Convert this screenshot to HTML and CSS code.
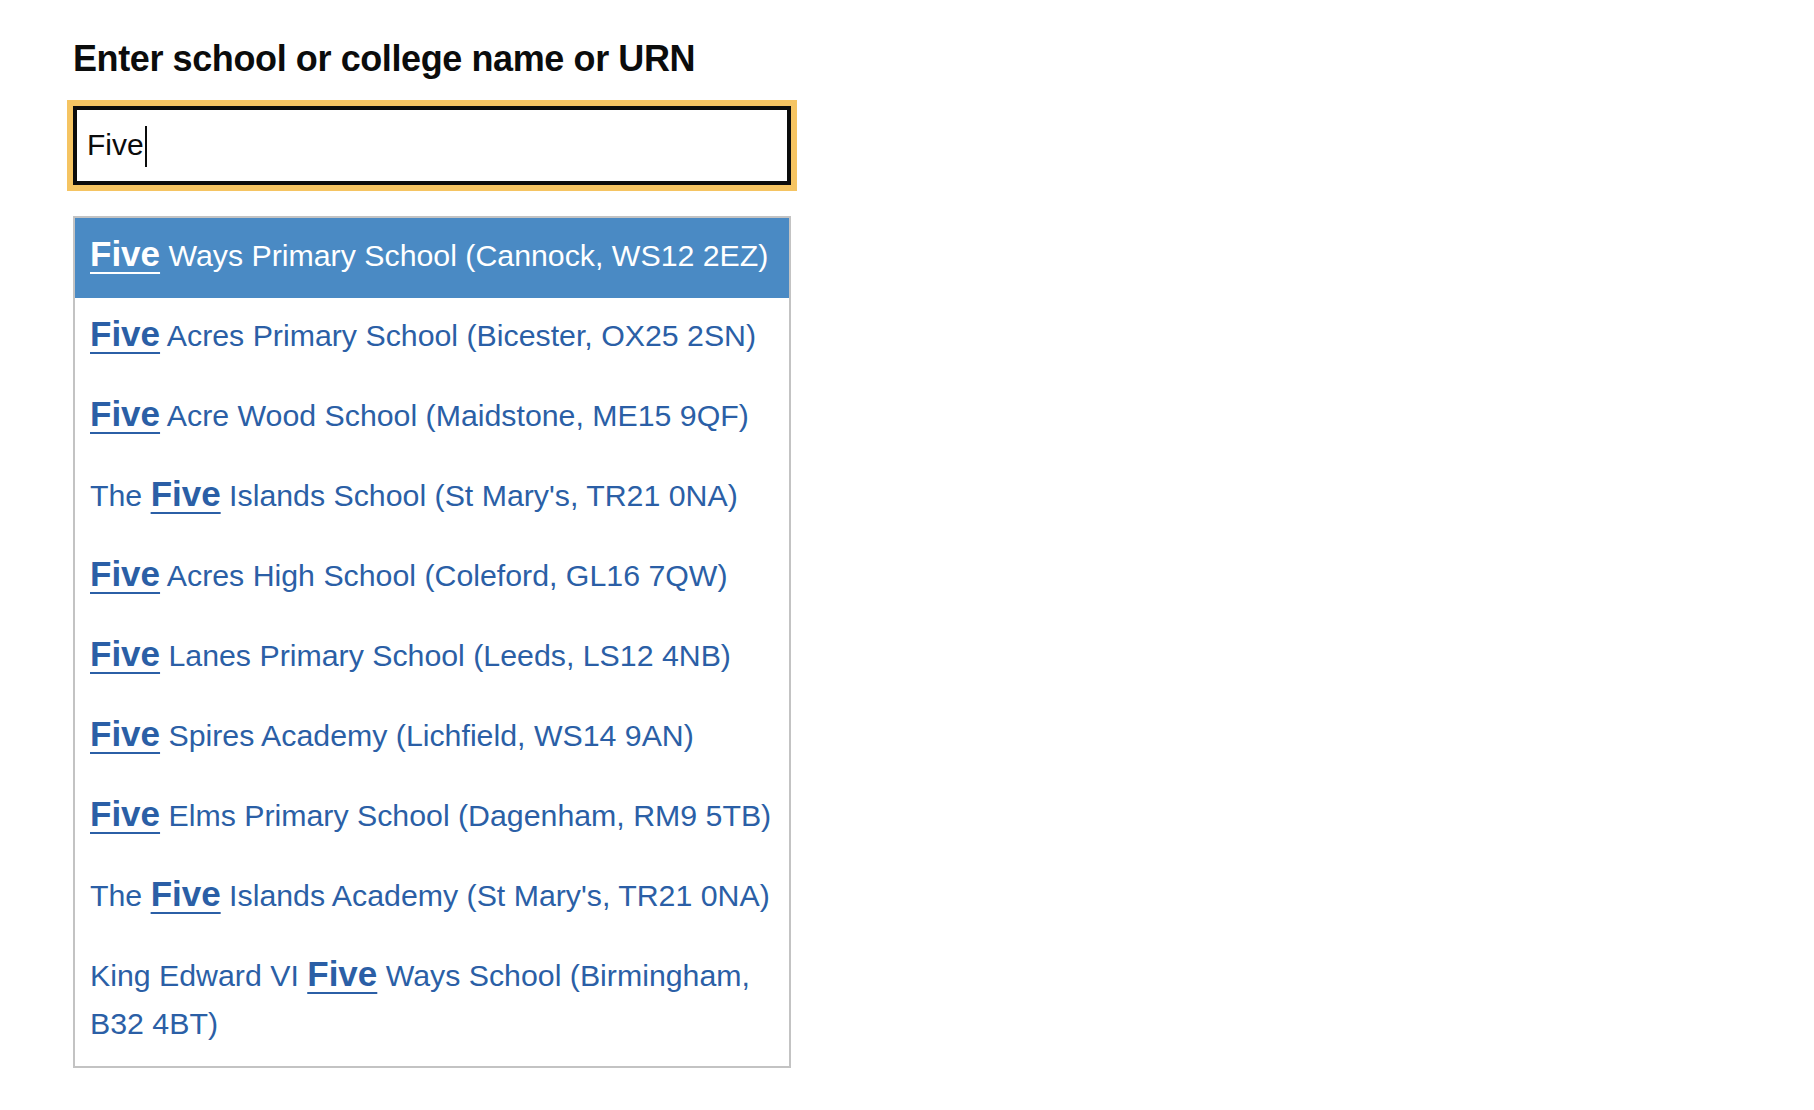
FILE: index.html
```html
<!DOCTYPE html>
<html lang="en">
<head>
<meta charset="utf-8">
<title>Find a school</title>
<link rel="stylesheet" href="styles.css">
</head>
<body>
<div class="page">
  <h1 class="label">Enter school or college name or URN</h1>
  <div class="field">
    <div class="input"><span class="value">Five</span><span class="caret"></span></div>
  </div>
  <ul class="menu">
    <li class="option option-focused"><strong>Five</strong> Ways Primary School (Cannock, WS12 2EZ)</li>
    <li class="option"><strong>Five</strong> Acres Primary School (Bicester, OX25 2SN)</li>
    <li class="option"><strong>Five</strong> Acre Wood School (Maidstone, ME15 9QF)</li>
    <li class="option">The <strong>Five</strong> Islands School (St Mary's, TR21 0NA)</li>
    <li class="option"><strong>Five</strong> Acres High School (Coleford, GL16 7QW)</li>
    <li class="option"><strong>Five</strong> Lanes Primary School (Leeds, LS12 4NB)</li>
    <li class="option"><strong>Five</strong> Spires Academy (Lichfield, WS14 9AN)</li>
    <li class="option"><strong>Five</strong> Elms Primary School (Dagenham, RM9 5TB)</li>
    <li class="option">The <strong>Five</strong> Islands Academy (St Mary's, TR21 0NA)</li>
    <li class="option">King Edward VI <strong>Five</strong> Ways School (Birmingham, B32 4BT)</li>
  </ul>
</div>
</body>
</html>
```
FILE: styles.css
```css
html, body {
  margin: 0;
  padding: 0;
  background: #ffffff;
}

.page {
  padding: 41px 0 0 73px;
  font-family: "Liberation Sans", Arial, sans-serif;
  color: #0b0c0c;
}

.label {
  margin: 0;
  font-size: 36px;
  line-height: 36px;
  letter-spacing: -0.4px;
  font-weight: 700;
  color: #0b0c0c;
}

.field {
  margin-top: 29px;
  width: 718px;
}

.input {
  box-sizing: border-box;
  width: 718px;
  border: 4px solid #0b0c0c;
  outline: 6px solid #f5c462;
  padding: 11px 10px 12px 10px;
  font-size: 30px;
  line-height: 48px;
  color: #0b0c0c;
  background: #fff;
}

.caret {
  display: inline-block;
  width: 2px;
  height: 41px;
  margin-left: 1px;
  background: #0b0c0c;
  vertical-align: -12px;
}

.menu {
  list-style: none;
  margin: 31px 0 0 0;
  padding: 0;
  box-sizing: border-box;
  width: 718px;
  border: 2px solid #c3c3c3;
  background: #fff;
}

.option {
  padding: 14px 12px 18px 15px;
  font-size: 30.3px;
  line-height: 48px;
  color: #2b5fa6;
}

.option strong {
  font-size: 35px;
  line-height: 1;
  font-weight: 700;
  text-decoration: underline;
  text-decoration-thickness: 2px;
  text-underline-offset: 6px;
}

.option-focused {
  background: #4a8ac4;
  color: #ffffff;
}
```
